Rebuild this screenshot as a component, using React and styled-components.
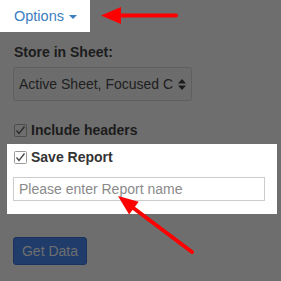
import React from 'react';
import styled, { createGlobalStyle } from 'styled-components';

const GlobalStyle = createGlobalStyle`
  html, body {
    margin: 0;
    padding: 0;
    background: #6e6e6e;
  }
  * {
    box-sizing: border-box;
  }
`;

const Page = styled.div`
  position: relative;
  width: 281px;
  height: 281px;
  overflow: hidden;
  background: #6e6e6e;
  font-family: "Liberation Sans", Arial, sans-serif;
  font-size: 14px;
  color: #1c1c1c;
`;

const Tab = styled.div`
  display: flex;
  align-items: center;
  gap: 5px;
  width: 90px;
  height: 32px;
  padding-left: 14px;
  background: #fff;
  color: #3a7dc0;
  font-size: 14.5px;
`;

const Caret = styled.span`
  width: 0;
  height: 0;
  margin-top: 1px;
  border-left: 4px solid transparent;
  border-right: 4px solid transparent;
  border-top: 4px solid #3a7dc0;
`;

const Body = styled.div`
  display: flex;
  flex-direction: column;
  padding: 12px 0 0 13px;
`;

const Label = styled.div`
  padding-left: 1px;
  font-weight: bold;
  line-height: 16px;
  color: #1c1c1c;
`;

const Select = styled.div`
  display: flex;
  align-items: center;
  justify-content: space-between;
  width: 179px;
  height: 34px;
  margin-top: 7px;
  padding: 0 5px 0 5px;
  border: 1px solid #5f5f5f;
  border-radius: 3px;
  background: #6c6c6c;
  color: #202020;
  white-space: nowrap;
  overflow: hidden;
`;

const CheckRow = styled.label`
  display: flex;
  align-items: center;
  gap: 4px;
  padding-left: 1px;
  font-weight: bold;
  line-height: 16px;
  margin-top: ${p => p.$top || 0}px;
  color: ${p => (p.$lit ? '#333' : '#1c1c1c')};
`;

const Panel = styled.div`
  display: flex;
  flex-direction: column;
  width: 270px;
  height: 70px;
  margin: 6px 0 0 -6px;
  padding: 5px 0 0 6px;
  background: #fff;
`;

const Input = styled.div`
  width: 252px;
  height: 24px;
  margin-top: 12px;
  padding-left: 5px;
  display: flex;
  align-items: center;
  border: 1px solid #cccccc;
  color: #8a8a8a;
`;

const Button = styled.div`
  display: flex;
  align-items: center;
  justify-content: center;
  width: 74px;
  height: 28px;
  margin-top: 23px;
  border: 1px solid #1a335e;
  border-radius: 3px;
  background: #203c6b;
  color: #6f6f6f;
`;

const Annotations = styled.svg`
  position: absolute;
  left: 0;
  top: 0;
  pointer-events: none;
`;

const Check = ({ lit }) => (
  <svg width="13" height="13" viewBox="0 0 13 13">
    <rect x="0.5" y="0.5" width="12" height="12" rx="1" fill="none" stroke={lit ? '#9a9a9a' : '#4c4c4c'} />
    <path d="M2.5 6.5 L5 9.5 L10.5 2.5" fill="none" stroke={lit ? '#444' : '#2a2a2a'} strokeWidth="1.3" />
  </svg>
);

const Spinner = () => (
  <svg width="8" height="11" viewBox="0 0 8 11">
    <path d="M0 4.5 L4 0 L8 4.5 Z M0 6.5 L4 11 L8 6.5 Z" fill="#1c1c1c" />
  </svg>
);

const App = () => (
  <Page>
    <GlobalStyle />
    <Tab>
      Options
      <Caret />
    </Tab>
    <Body>
      <Label>Store in Sheet:</Label>
      <Select>
        <span>Active Sheet, Focused C</span>
        <Spinner />
      </Select>
      <CheckRow $top={21}>
        <Check />
        Include headers
      </CheckRow>
      <Panel>
        <CheckRow $lit>
          <Check lit />
          Save Report
        </CheckRow>
        <Input>Please enter Report name</Input>
      </Panel>
      <Button>Get Data</Button>
    </Body>
    <Annotations width="281" height="281" viewBox="0 0 281 281">
      <line x1="176" y1="15.5" x2="118" y2="15.5" stroke="#ff0000" strokeWidth="4" strokeLinecap="round" />
      <polygon points="101,15.5 121,7 121,24" fill="#ff0000" />
      <line x1="192" y1="252" x2="132" y2="207" stroke="#ff0000" strokeWidth="4" strokeLinecap="round" />
      <polygon points="118,196 138.7,201.7 129.1,214.5" fill="#ff0000" />
    </Annotations>
  </Page>
);

export default App;
